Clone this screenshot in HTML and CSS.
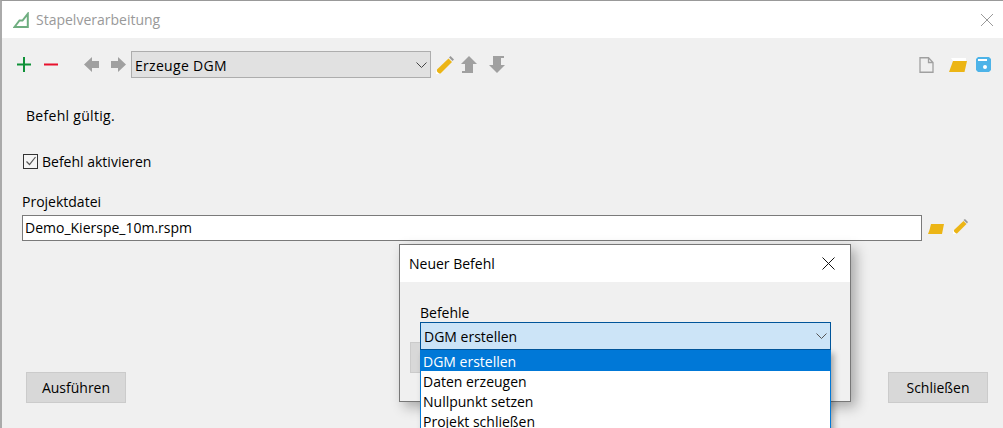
FILE: index.html
```html
<!DOCTYPE html>
<html lang="de">
<head>
<meta charset="utf-8">
<title>Stapelverarbeitung</title>
<link rel="stylesheet" href="styles.css">
</head>
<body>
<div class="window">
  <header class="titlebar">
    <svg class="app-icon" viewBox="0 0 16 16" width="16" height="16"><path d="M1.500 15 L6.500 8.500 H9.500 L14.800 1.800 V15 Z" fill="none" stroke="#6fae80" stroke-width="2"/></svg>
    <span class="title">Stapelverarbeitung</span>
    <svg class="close" viewBox="0 0 12 12" width="12" height="12"><path d="M0 0 12 12M12 0 0 12" stroke="#999" stroke-width="1" fill="none"/></svg>
  </header>
  <main class="content">
    <div class="toolbar">
      <svg class="ico plus" viewBox="0 0 14 15" width="14" height="15"><path d="M6 0h2v6.500H14v2H8V15H6V8.500H0v-2h6z" fill="#0f9138"/></svg>
      <svg class="ico minus" viewBox="0 0 14 15" width="14" height="15"><path d="M0 6.500h14v2H0z" fill="#e8112d"/></svg>
      <svg class="ico back" viewBox="0 0 15 15" width="15" height="15"><path d="M8 0 0 7.500 8 15V11h7V4H8z" fill="#a0a0a0"/></svg>
      <svg class="ico fwd" viewBox="0 0 15 15" width="15" height="15"><path d="M7 0 15 7.500 7 15V11H0V4h7z" fill="#a0a0a0"/></svg>
      <div class="combo">
        <span class="combo-text">Erzeuge DGM</span>
        <svg class="chev" viewBox="0 0 11 6" width="11" height="6"><path d="M.5 .5 5.500 5.500 10.500 .5" fill="none" stroke="#444" stroke-width="1"/></svg>
      </div>
      <svg class="ico pencil" viewBox="0 0 18 18" width="18" height="18"><path d="M1 13.500 L12.500 2.500 16 6 4.500 17.500H1Z" fill="#ecb515"/><path d="M0 14.500 3.500 18H0Z" fill="#fff"/><path d="M13 1.500 14.500 0 18 3.500 16.500 5Z" fill="#999"/></svg>
      <svg class="ico up" viewBox="0 0 16 17" width="16" height="17"><path d="M8 0 16 8H12V17H1V15H4V8H0Z" fill="#a0a0a0"/></svg>
      <svg class="ico down" viewBox="0 0 16 17" width="16" height="17"><path d="M4 0H15V2H12V9H16L8 17 0 9H4Z" fill="#a0a0a0"/></svg>
      <span class="spacer"></span>
      <svg class="ico doc" viewBox="0 0 15 16" width="15" height="16"><path d="M1 .75H9.500L14 5.500V15.250H1Z M9.500 .75V5.500H14" fill="none" stroke="#a0a0a0" stroke-width="1.300"/></svg>
      <svg class="ico folder" viewBox="0 0 18 14" width="18" height="14"><path d="M2 0H17V3H4Z" fill="#fff"/><path d="M4 3H18L15.500 14H0Z" fill="#ecb515"/></svg>
      <svg class="ico save" viewBox="0 0 15 15" width="15" height="15"><path d="M2 0H13L15 2V13L13 15H2L0 13V2Z" fill="#4db3e8"/><path d="M2 2H11V4H2Z" fill="#fff"/><circle cx="9" cy="10" r="2" fill="#fff"/></svg>
    </div>

    <p class="status">Befehl gültig.</p>

    <label class="check">
      <span class="box"><svg viewBox="0 0 12 12" width="12" height="12"><path d="M1.500 6.500 4.500 9.500 10.500 2" fill="none" stroke="#555" stroke-width="1.200"/></svg></span>
      Befehl aktivieren
    </label>

    <div class="field-label">Projektdatei</div>
    <div class="field">
      <div class="input">Demo_Kierspe_10m.rspm</div>
      <svg class="ico folder-small" viewBox="0 0 16 10" width="16" height="10"><path d="M3 0H16L14 10H0L1.500 6Z" fill="#ecb515"/></svg>
      <svg class="ico pencil-small" viewBox="0 0 15 15" width="15" height="15"><path d="M1 11 10.500 2 13.500 5 4 14.500H1Z" fill="#ecb515"/><path d="M0 11.500 3.500 15H0Z" fill="#fff"/><path d="M10.500 1 12 0 15 3 14 4.500Z" fill="#999"/></svg>
    </div>

    <div class="actions">
      <button class="btn">Ausführen</button>
      <button class="btn">Schließen</button>
    </div>
  </main>
</div>

<section class="dialog">
  <header class="dialog-title">
    <span>Neuer Befehl</span>
    <svg viewBox="0 0 13 13" width="13" height="13"><path d="M.5 .5 12.500 12.500M12.500 .5 .5 12.500" stroke="#111" stroke-width="1" fill="none"/></svg>
  </header>
  <div class="dialog-body">
    <div class="dialog-label">Befehle</div>
    <div class="dialog-combo">
      <span>DGM erstellen</span>
      <svg viewBox="0 0 11 6" width="11" height="6"><path d="M.5 .5 5.500 5.500 10.500 .5" fill="none" stroke="#555" stroke-width="1"/></svg>
    </div>
  </div>
  <div class="behind-btn"></div>
</section>

<ul class="droplist">
  <li class="sel">DGM erstellen</li>
  <li>Daten erzeugen</li>
  <li>Nullpunkt setzen</li>
  <li>Projekt schließen</li>
</ul>
</body>
</html>
```
FILE: styles.css
```css
* { box-sizing: border-box; }
html, body { margin: 0; height: 100%; overflow: hidden; }
body {
  font-family: "Open Sans", "Noto Sans", sans-serif;
  font-size: 14px;
  color: #000;
  background: #f0f0f0;
  position: relative;
}
.window {
  height: 428px;
  display: flex;
  flex-direction: column;
  border-top: 1px solid #999;
  border-left: 2px solid #aaa;
}
.titlebar {
  height: 37px;
  background: #fff;
  display: flex;
  align-items: center;
  padding: 0 10px 0 11px;
}
.app-icon { margin-right: 7px; }
.title { color: #999; font-size: 14px; }
.close { margin-left: auto; }
.content {
  flex: 1;
  display: flex;
  flex-direction: column;
  background: #f0f0f0;
  padding: 13px 12px 25px 20px;
}
.toolbar { display: flex; align-items: center; height: 27px; }
.ico { flex: none; display: block; }
.plus { margin-left: -5px; }
.minus { margin-left: 13px; }
.back { margin-left: 26px; }
.fwd { margin-left: 12px; }
.combo {
  width: 300px;
  height: 27px;
  margin-left: 5px;
  background: #e1e1e1;
  border: 1px solid #adadad;
  display: flex;
  align-items: center;
  justify-content: space-between;
  padding: 0 3px 0 3px;
}
.combo-text { letter-spacing: .3px; padding-top: 2px; }
.pencil { margin-left: 5px; }
.up { margin-left: 7px; }
.down { margin-left: 12px; }
.spacer { flex: 1; }
.doc { margin-right: 15px; }
.folder { margin-right: 9px; }
.status { margin: 28px 0 0 4px; line-height: 20px; height: 20px; letter-spacing: .3px; }
.check { display: flex; align-items: center; gap: 4px; margin-top: 25px; height: 20px; }
.box {
  width: 15px; height: 15px;
  margin-left: 1px;
  border: 1px solid #333;
  background: #f5f5f5;
  display: flex; align-items: center; justify-content: center;
}
.field-label { margin-top: 21px; line-height: 20px; height: 20px; }
.field { display: flex; align-items: center; margin-top: 3px; }
.input {
  width: 900px;
  height: 26px;
  background: #fff;
  border: 1px solid #7a7a7a;
  padding-left: 2px;
  line-height: 24px;
}
.folder-small { margin-left: 6px; margin-top: 1px; }
.pencil-small { margin-left: 9px; margin-top: -3px; }
.actions {
  margin-top: auto;
  display: flex;
  justify-content: space-between;
  padding: 0 3px 0 4px;
}
.btn {
  width: 100px;
  height: 31px;
  background: #d8d8d8;
  border: 1px solid #cbcbcb;
  font: inherit;
  color: #000;
  padding: 0;
}
.dialog {
  position: absolute;
  left: 399px; top: 244px;
  width: 452px; height: 158px;
  background: #f0f0f0;
  border: 1px solid #777;
  box-shadow: 5px 5px 12px rgba(0,0,0,.3);
}
.dialog-title {
  height: 37px;
  background: #fff;
  display: flex;
  align-items: center;
  justify-content: space-between;
  padding: 0 15px 0 9px;
}
.dialog-body { padding: 20px 19px 0 20px; position: relative; z-index: 1; }
.dialog-label { height: 20px; line-height: 22px; }
.dialog-combo {
  height: 28px;
  background: #cce4f7;
  border: 1px solid #005499;
  display: flex;
  align-items: center;
  justify-content: space-between;
  padding: 0 3px 0 3px;
}
.behind-btn {
  position: absolute;
  left: 10px; top: 97px;
  width: 100px; height: 31px;
  background: #d8d8d8;
  border: 1px solid #cbcbcb;
}
.droplist {
  position: absolute;
  left: 420px; top: 350px;
  width: 411px;
  margin: 0;
  padding: 0;
  list-style: none;
  background: #fff;
  border: 1px solid #0078d7;
  border-top: 0;
  box-shadow: 3px 3px 6px rgba(0,0,0,.3);
}
.droplist li { height: 20px; line-height: 22px; padding-left: 2px; }
.droplist .sel { background: #0078d7; color: #fff; height: 21px; line-height: 23px; }
```
